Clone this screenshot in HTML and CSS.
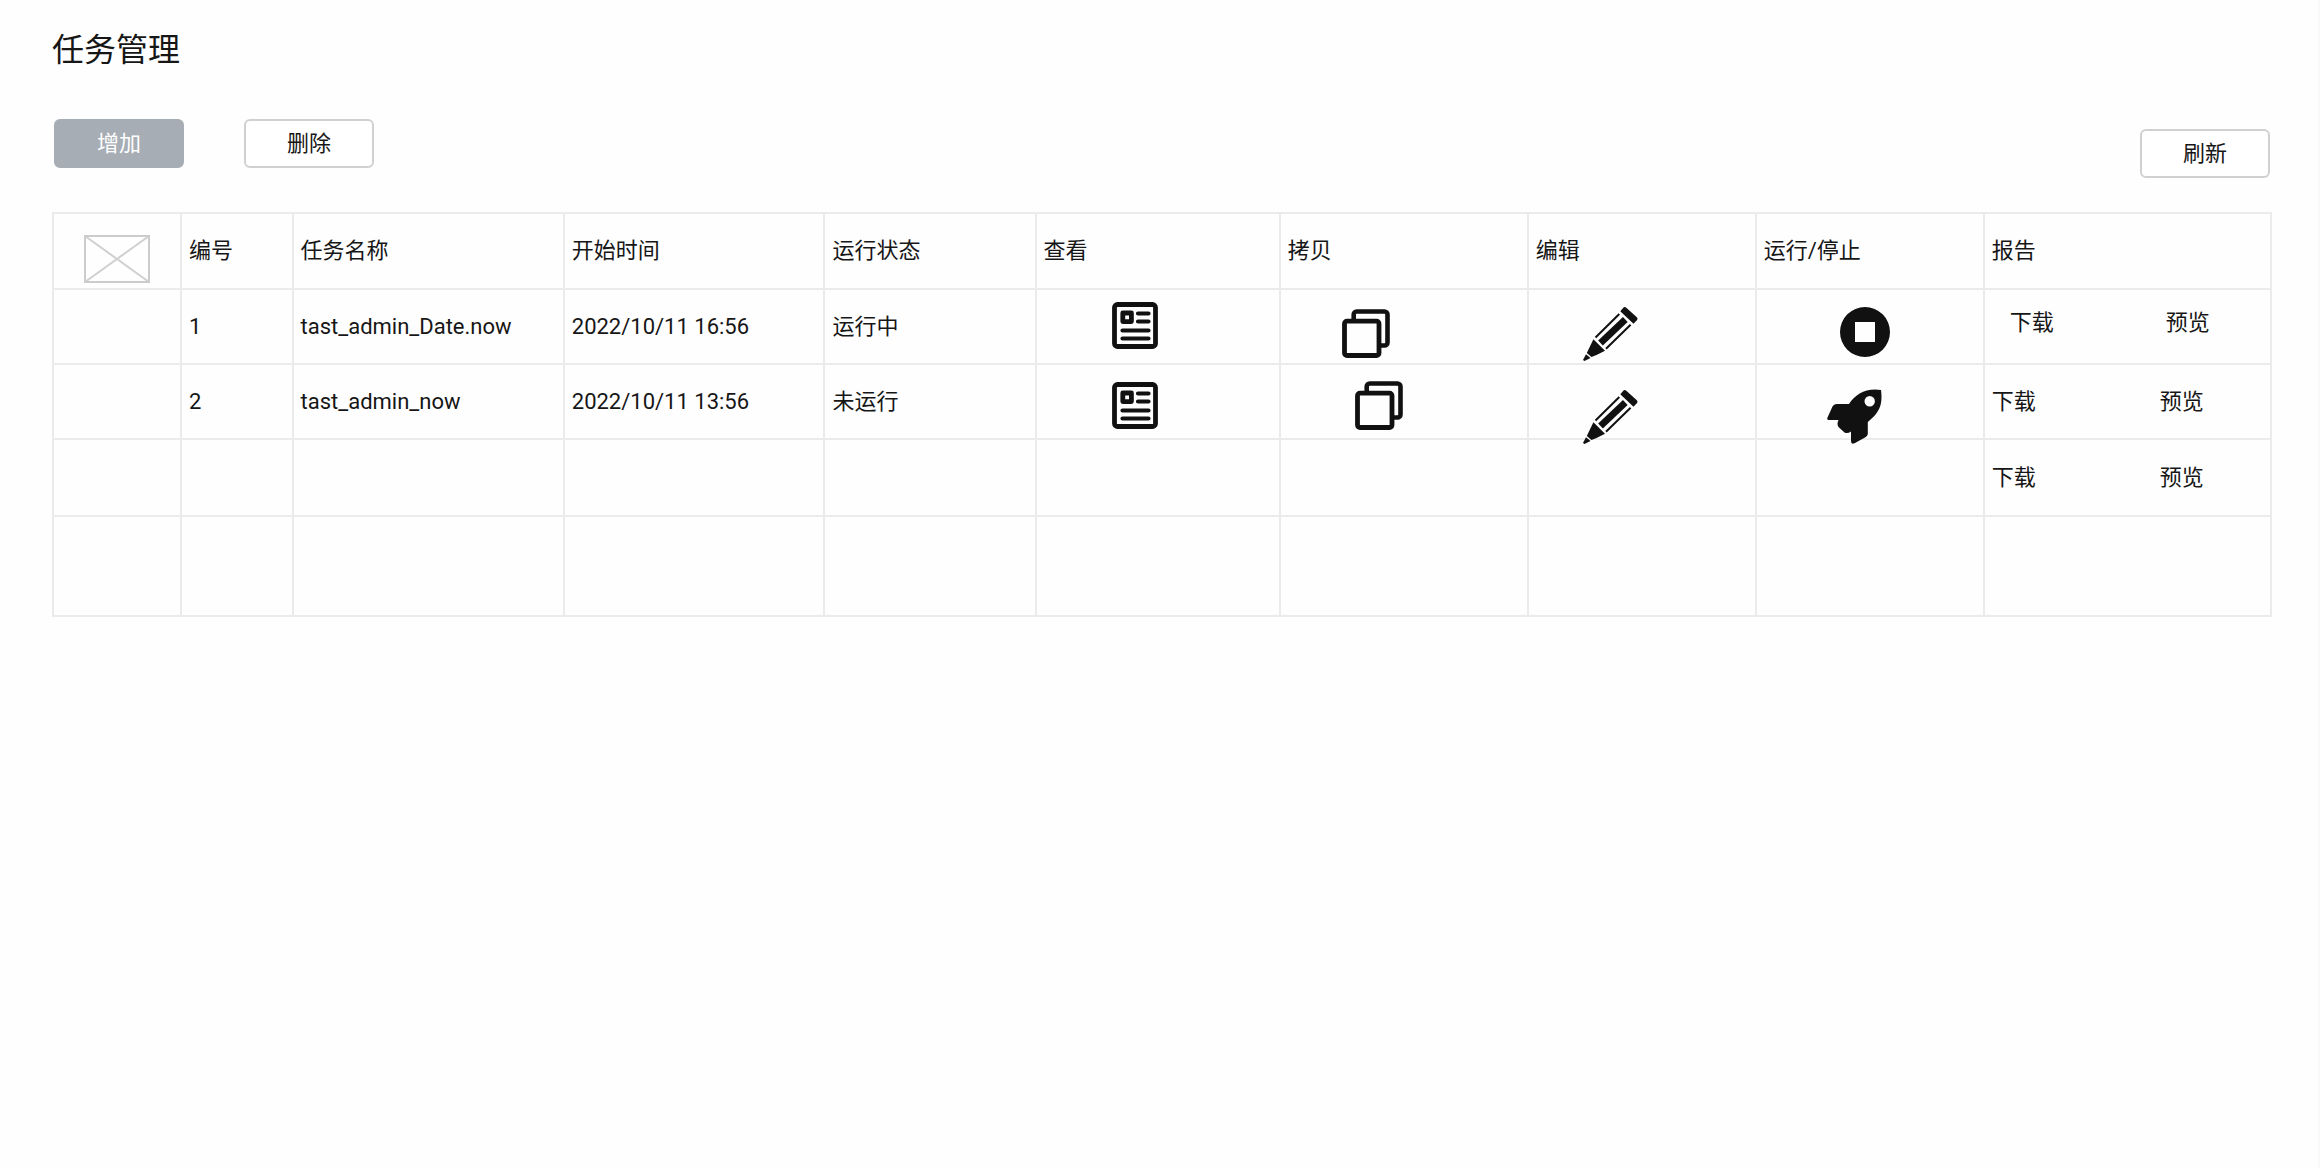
FILE: index.html
```html
<!DOCTYPE html>
<html lang="zh-CN">
<head>
<meta charset="utf-8">
<title>任务管理</title>
<meta name="viewport" content="width=device-width, initial-scale=1">
<link rel="stylesheet" href="styles.css">
</head>
<body>
<svg class="sprite" aria-hidden="true">
  <symbol id="icon-view" viewBox="0 0 46 47">
    <rect x="2.5" y="2.5" width="41" height="42" rx="3" fill="none" stroke="#111" stroke-width="4.8"/>
    <rect x="10.8" y="11" width="8.6" height="8.6" fill="none" stroke="#111" stroke-width="4.8" stroke-linejoin="round"/>
    <path d="M26 11.5h10.5M26 19.5h10.5M10.5 28.5h26M10.5 36.5h26" stroke="#111" stroke-width="4.2" stroke-linecap="round"/>
  </symbol>
  <symbol id="icon-copy" viewBox="0 0 48 49">
    <rect x="2.5" y="12.2" width="34.5" height="34.3" rx="2.5" fill="none" stroke="#111" stroke-width="4.8"/>
    <path d="M11.7 11V5.5a3 3 0 0 1 3-3H42.500a3 3 0 0 1 3 3V33.500a3 3 0 0 1-3 3H38" fill="none" stroke="#111" stroke-width="4.600"/>
  </symbol>
  <symbol id="icon-edit" viewBox="0 0 55 55">
    <path d="M40.300 1.700q1.400-1.400 3 0L53.800 11.200q1.400 1.400 0 3L50.500 17.700 37.300 5.300z" fill="#111"/>
    <path d="M12.500 31.500 36.300 8M23 42.700 47.600 18.800" stroke="#111" stroke-width="2"/>
    <path d="M17.500 37 42.300 13.500" stroke="#111" stroke-width="6.800"/>
    <path d="M10.400 33.300 22 44.800 13.500 49 8.500 51 3.800 47z" fill="#111"/>
    <path d="M3 48.200 7.500 52 1.500 55 0 54z" fill="#111"/>
  </symbol>
  <symbol id="icon-stop" viewBox="0 0 50 50">
    <path d="M25 0a25 25 0 1 1 0 50 25 25 0 0 1 0-50zM15 15v20h20V15z" fill="#111" fill-rule="evenodd"/>
  </symbol>
  <symbol id="icon-run" viewBox="0 0 55 55">
    <path d="M54 1Q55 8 54 14C52.500 22 47 28 40.800 33V45Q40.500 47.500 38 48.500L28 54Q24 56 24 52V42.500Q20.500 45 17.500 43.500L11.500 38Q9.500 35 11.500 31H2Q-.5 31 .5 28.500L5.500 17.500Q6.500 15 9.500 15H22C28 5 40-1.500 54 1zM42.700 7a5.200 5.200 0 1 0 0 10.400 5.200 5.200 0 0 0 0-10.400z" fill="#111" fill-rule="evenodd"/>
  </symbol>
</svg>

<main class="page">
  <h1 class="page-title">任务管理</h1>

  <div class="toolbar">
    <div class="toolbar-group">
      <button type="button" class="button button-primary">增加</button>
      <button type="button" class="button">删除</button>
    </div>
    <button type="button" class="button button-refresh">刷新</button>
  </div>

  <table class="tasks">
    <colgroup>
      <col class="col-thumb"><col class="col-id"><col class="col-name"><col class="col-time"><col class="col-status">
      <col class="col-view"><col class="col-copy"><col class="col-edit"><col class="col-run"><col class="col-report">
    </colgroup>
    <thead>
      <tr class="row-head">
        <td class="thumb-cell">
          <svg class="placeholder" viewBox="0 0 66 48" aria-hidden="true">
            <path d="M1 1 65 47M65 1 1 47" stroke="#d0d0d0" stroke-width="2"/>
            <rect x="1" y="1" width="64" height="46" fill="none" stroke="#ccc" stroke-width="2"/>
          </svg>
        </td>
        <th scope="col">编号</th>
        <th scope="col">任务名称</th>
        <th scope="col">开始时间</th>
        <th scope="col">运行状态</th>
        <th scope="col">查看</th>
        <th scope="col">拷贝</th>
        <th scope="col">编辑</th>
        <th scope="col">运行/停止</th>
        <th scope="col">报告</th>
      </tr>
    </thead>
    <tbody>
      <tr class="row-running">
        <td></td>
        <td>1</td>
        <td>tast_admin_Date.now</td>
        <td>2022/10/11 16:56</td>
        <td>运行中</td>
        <td class="icon-cell view-cell"><button type="button" class="icon-button" aria-label="查看"><svg width="46" height="47"><use href="#icon-view"/></svg></button></td>
        <td class="icon-cell copy-cell"><button type="button" class="icon-button" aria-label="拷贝"><svg width="48" height="49"><use href="#icon-copy"/></svg></button></td>
        <td class="icon-cell edit-cell"><button type="button" class="icon-button" aria-label="编辑"><svg width="55" height="55"><use href="#icon-edit"/></svg></button></td>
        <td class="icon-cell run-cell"><button type="button" class="icon-button" aria-label="停止"><svg width="50" height="50"><use href="#icon-stop"/></svg></button></td>
        <td class="report-cell"><div class="report-links"><a href="#download-1">下载</a><a href="#preview-1">预览</a></div></td>
      </tr>
      <tr class="row-idle">
        <td></td>
        <td>2</td>
        <td>tast_admin_now</td>
        <td>2022/10/11 13:56</td>
        <td>未运行</td>
        <td class="icon-cell view-cell"><button type="button" class="icon-button" aria-label="查看"><svg width="46" height="47"><use href="#icon-view"/></svg></button></td>
        <td class="icon-cell copy-cell"><button type="button" class="icon-button" aria-label="拷贝"><svg width="48" height="49"><use href="#icon-copy"/></svg></button></td>
        <td class="icon-cell edit-cell"><button type="button" class="icon-button" aria-label="编辑"><svg width="55" height="55"><use href="#icon-edit"/></svg></button></td>
        <td class="icon-cell run-cell"><button type="button" class="icon-button" aria-label="运行"><svg width="55" height="55"><use href="#icon-run"/></svg></button></td>
        <td class="report-cell"><div class="report-links"><a href="#download-2">下载</a><a href="#preview-2">预览</a></div></td>
      </tr>
      <tr class="row-blank">
        <td></td><td></td><td></td><td></td><td></td><td></td><td></td><td></td><td></td>
        <td class="report-cell"><div class="report-links"><a href="#download-3">下载</a><a href="#preview-3">预览</a></div></td>
      </tr>
      <tr class="row-last">
        <td></td><td></td><td></td><td></td><td></td><td></td><td></td><td></td><td></td><td></td>
      </tr>
    </tbody>
  </table>
</main>
</body>
</html>
```
FILE: styles.css
```css
* {
  box-sizing: border-box;
}

body {
  margin: 0;
  background: #fefefe;
  color: #161616;
  font-family: Roboto, "Noto Sans CJK SC", sans-serif;
  font-size: 22px;
  line-height: 32px;
}

.sprite {
  display: none;
}

.page {
  min-height: 100vh;
  padding: 26px 46px 48px 52px;
  border-right: 2px solid #f9f9f9;
}

.page-title {
  margin: 0;
  font-size: 32px;
  font-weight: 400;
  line-height: 48px;
}

/* Toolbar */

.toolbar {
  display: flex;
  justify-content: space-between;
  align-items: flex-start;
  margin-top: 45px;
  padding: 0 2px;
}

.toolbar-group {
  display: flex;
  gap: 60px;
}

.button {
  width: 130px;
  height: 49px;
  padding: 0;
  border: 2px solid #d0d0d0;
  border-radius: 6px;
  background: #fff;
  color: inherit;
  font: inherit;
}

.button-primary {
  border-color: #a6adb4;
  background: #a6adb4;
  color: #fff;
}

.button-refresh {
  margin-top: 10px;
}

/* Task table */

.tasks {
  width: 100%;
  margin-top: 34px;
  border-collapse: collapse;
  table-layout: fixed;
}

.col-thumb { width: 5.77%; }
.col-id { width: 5.03%; }
.col-name { width: 12.23%; }
.col-time { width: 11.75%; }
.col-status { width: 9.52%; }
.col-view { width: 11.01%; }
.col-copy { width: 11.18%; }
.col-edit { width: 10.28%; }
.col-run { width: 10.28%; }

.tasks th,
.tasks td {
  padding: 0 0 0 7px;
  border: 2px solid #ebebeb;
  font-weight: 400;
  text-align: left;
}

.row-head { height: 76px; }
.row-running,
.row-idle { height: 75px; }
.row-blank { height: 77px; }
.row-last { height: 100px; }

.tasks .thumb-cell {
  padding: 16px 0 0;
}

.placeholder {
  display: block;
  width: 66px;
  height: 48px;
  margin: 0 auto;
}

/* Icons may reach over the rule below their row */

.tasks .icon-cell {
  vertical-align: top;
}

.icon-button {
  display: block;
  margin: 0 0 -24px;
  padding: 0;
  border: 0;
  background: none;
}

.icon-button svg {
  display: block;
}

.tasks .view-cell { padding: 12px 0 0 75px; }
.tasks .copy-cell { padding: 19px 0 0 61px; }
.tasks .edit-cell { padding: 16px 0 0 54px; }
.tasks .run-cell { padding: 17px 0 0 83px; }

.tasks .row-idle .view-cell { padding-top: 17px; }
.tasks .row-idle .copy-cell { padding: 16px 0 0 74px; }
.tasks .row-idle .edit-cell { padding-top: 24px; }
.tasks .row-idle .run-cell { padding: 24px 0 0 70px; }

.report-links {
  display: flex;
  gap: 124px;
}

.report-links a {
  color: inherit;
  text-decoration: none;
}

.row-running .report-links {
  gap: 112px;
  padding: 0 0 8px 18px;
}
```
